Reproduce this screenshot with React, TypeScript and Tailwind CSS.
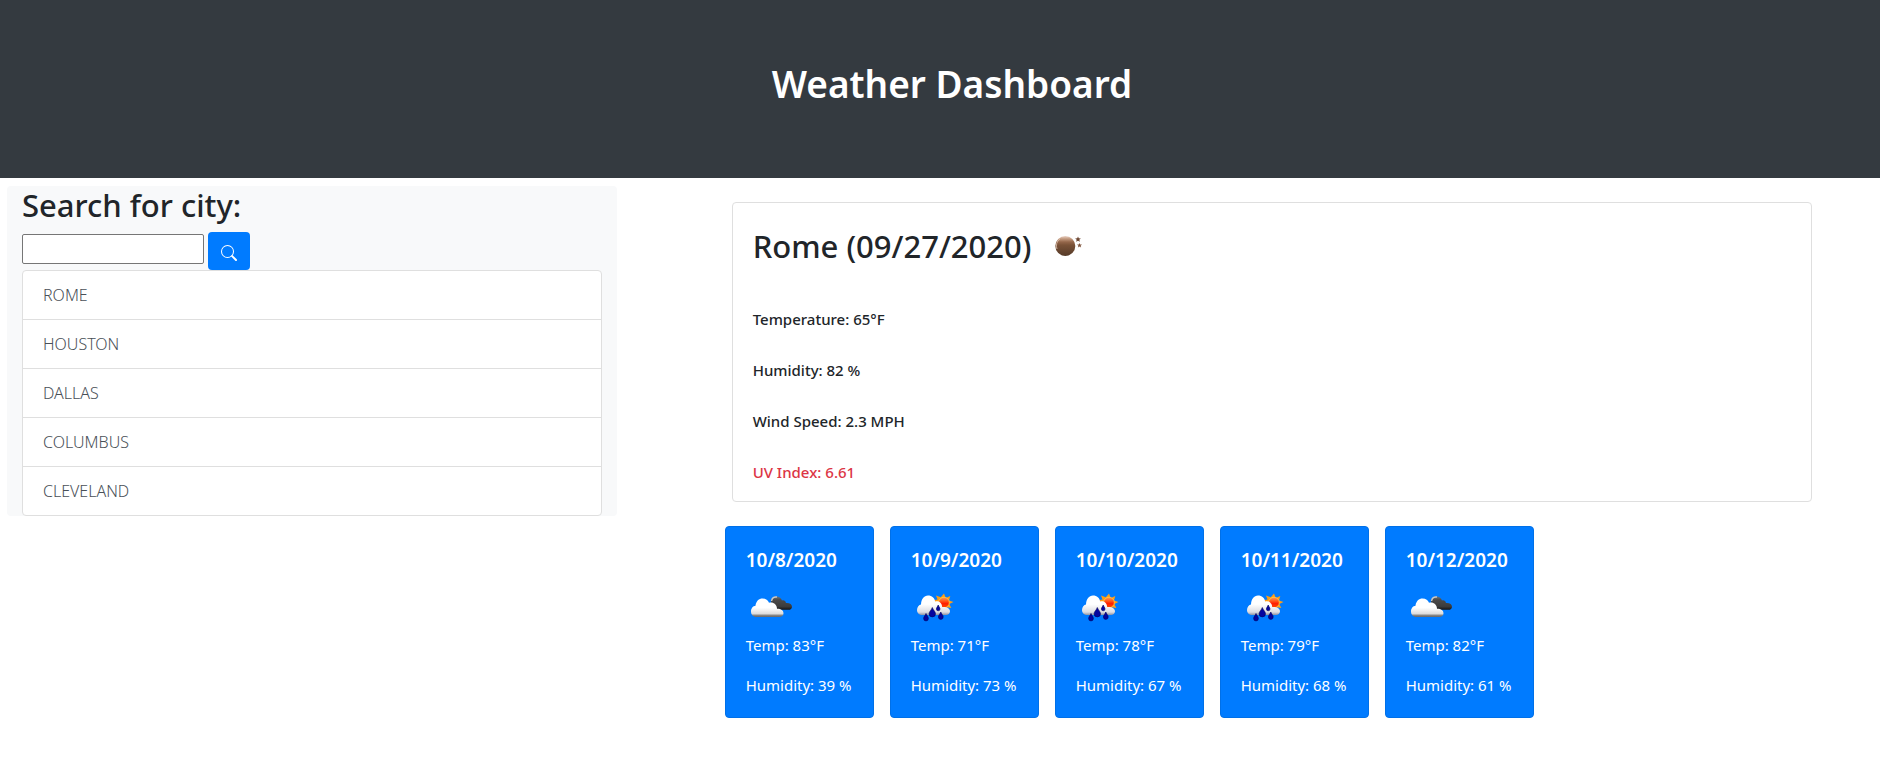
import React from "react";

type Sky = "cloudy" | "showers";

interface Forecast {
  date: string;
  sky: Sky;
  temp: number;
  humidity: number;
}

const cities = ["ROME", "HOUSTON", "DALLAS", "COLUMBUS", "CLEVELAND"];

const forecasts: Forecast[] = [
  { date: "10/8/2020", sky: "cloudy", temp: 83, humidity: 39 },
  { date: "10/9/2020", sky: "showers", temp: 71, humidity: 73 },
  { date: "10/10/2020", sky: "showers", temp: 78, humidity: 67 },
  { date: "10/11/2020", sky: "showers", temp: 79, humidity: 68 },
  { date: "10/12/2020", sky: "cloudy", temp: 82, humidity: 61 },
];

function SearchIcon() {
  return (
    <svg width="16" height="16" viewBox="0 0 16 16" fill="currentColor" aria-hidden="true">
      <path
        fillRule="evenodd"
        d="M10.442 10.442a1 1 0 0 1 1.415 0l3.85 3.85a1 1 0 0 1-1.414 1.415l-3.85-3.85a1 1 0 0 1 0-1.415z"
      />
      <path
        fillRule="evenodd"
        d="M6.5 12a5.5 5.5 0 1 0 0-11 5.5 5.5 0 0 0 0 11zM13 6.5a6.5 6.5 0 1 1-13 0 6.5 6.5 0 0 1 13 0z"
      />
    </svg>
  );
}

function ClearNightIcon() {
  return (
    <svg width="50" height="50" viewBox="0 0 50 50" role="img" aria-label="Clear night">
      <defs>
        <linearGradient id="moon" x1="0" y1="0" x2="0" y2="1">
          <stop offset="0" stopColor="#ecd5c8" />
          <stop offset="0.14" stopColor="#c39a80" />
          <stop offset="0.3" stopColor="#94664a" />
          <stop offset="0.45" stopColor="#7a5238" />
          <stop offset="1" stopColor="#553a28" />
        </linearGradient>
      </defs>
      <circle cx="22.3" cy="25" r="10" fill="url(#moon)" />
      <path d="M14 28a8.6 8.6 0 0 1 3-10.200" stroke="#dfc4b3" strokeWidth="1" fill="none" opacity="0.8" />
      <path d="M35 15.500l.8 1.800 2.100.1-1.600 1.300.6 2.100-1.900-1.100-1.900 1.100.6-2.100-1.600-1.300 2.100-.1z" fill="#6d4632" />
      <path d="M36.500 22l.7 1.500 1.800.1-1.400 1.100.5 1.800-1.600-.9-1.600.9.5-1.800-1.400-1.100 1.800-.1z" fill="#80563f" />
    </svg>
  );
}

function CloudyIcon() {
  return (
    <svg width="50" height="50" viewBox="0 0 50 50" role="img" aria-label="Cloudy">
      <defs>
        <linearGradient id="cloud-front" x1="0" y1="0" x2="0" y2="1">
          <stop offset="0.5" stopColor="#ffffff" />
          <stop offset="0.83" stopColor="#dcdcdc" />
          <stop offset="0.9" stopColor="#8a8a8a" />
          <stop offset="1" stopColor="#666666" />
        </linearGradient>
        <linearGradient id="cloud-back" x1="0" y1="0" x2="0" y2="1">
          <stop offset="0" stopColor="#777777" />
          <stop offset="0.25" stopColor="#4a4a4a" />
          <stop offset="0.75" stopColor="#3c3c3c" />
          <stop offset="1" stopColor="#141414" />
        </linearGradient>
      </defs>
      <path
        d="M25 22c-.5-4 2-6.500 5-6.500 3 0 5 1.500 6 4 1.500-.8 3.500-.2 4 2.500 3.500-.3 6 1 6 3.700 0 2-1.500 3.100-3.500 3.100H32z"
        fill="url(#cloud-back)"
      />
      <path d="M25.500 20c.5-3 2.500-4.500 5.500-4" stroke="#c8c8c8" strokeWidth="1.500" fill="none" />
      <path
        d="M10.500 36C7 36 5 33.500 5 30.500S7 25 9.500 24.800C10 20 13 17.500 16.500 17.500c3.500 0 5.500 1.700 6.500 4.300 4-1.300 8 1.700 8 6 3.500-.2 6.500 1.500 6.500 4.500 0 2.500-2 3.700-4 3.700z"
        fill="url(#cloud-front)"
      />
    </svg>
  );
}

function ShowersIcon() {
  return (
    <svg width="50" height="50" viewBox="0 0 50 50" role="img" aria-label="Sun and rain">
      <defs>
        <linearGradient id="rain-cloud" x1="0" y1="0" x2="0" y2="1">
          <stop offset="0.45" stopColor="#ffffff" />
          <stop offset="0.85" stopColor="#dddde2" />
          <stop offset="1" stopColor="#8d91a3" />
        </linearGradient>
        <linearGradient id="sun" x1="0" y1="0" x2="0" y2="1">
          <stop offset="0" stopColor="#ff9b54" />
          <stop offset="0.35" stopColor="#ff5a1e" />
          <stop offset="0.6" stopColor="#ff1e00" />
          <stop offset="1" stopColor="#ff4a00" />
        </linearGradient>
      </defs>
      <path
        d="M33 12.500l1.800 4.600 4.500-2-1.300 4.300 4.500 1.600-4.200 2 2 4-4.400-.8-.5 4.300-3.400-3-8-6.500-.5-2 3-.5-1.500-4 4.800 1.800z"
        fill="#ff9d14"
      />
      <circle cx="33" cy="21.500" r="5.300" fill="url(#sun)" stroke="#ffd24d" strokeWidth="0.7" />
      <path
        d="M11 34c-3 0-5-2.200-5-5s2-5.200 4-5.500c.2-5.300 3-9 7-9s6.500 2.500 7.200 6c3.800-1.300 6.800 1.700 7 5.500 4-.3 7.800 1 7.800 4.300 0 2.200-1.800 3.700-4 3.700z"
        fill="url(#rain-cloud)"
      />
      <g fill="#0505a0" stroke="#02025c" strokeWidth="0.600">
        <path d="M21.300 26.500c.7 2.400 3.200 4 3.200 6.200a3.200 3.200 0 0 1-6.400 0c0-2.200 2.500-3.800 3.200-6.200z" />
        <path d="M27.200 24c.4 1.500 1.800 2.600 1.800 4a1.800 1.800 0 0 1-3.600 0c0-1.400 1.400-2.500 1.800-4z" />
        <path d="M15 32.500c.6 1.800 2.400 3.300 2.400 5a2.400 2.400 0 0 1-4.800 0c0-1.700 1.800-3.200 2.400-5z" />
        <path d="M29.800 31c.6 1.800 2.400 3.300 2.400 5a2.400 2.400 0 0 1-4.800 0c0-1.700 1.800-3.200 2.400-5z" />
      </g>
    </svg>
  );
}

function SearchPanel() {
  return (
    <section className="rounded bg-[#f8f9fa] px-[15px]">
      <h2 className="mb-2 text-[31px] leading-[38px] font-medium">
        <label htmlFor="city">Search for city:</label>
      </h2>
      <form className="flex items-start gap-1" onSubmit={(e) => e.preventDefault()}>
        <input
          id="city"
          type="text"
          className="mt-0.5 h-[30px] w-[182px] rounded-xs border border-[#767676] bg-white px-1"
        />
        <button
          type="submit"
          aria-label="Search"
          className="flex h-[38px] w-[42px] items-center justify-center rounded bg-[#007bff] pt-1 text-white"
        >
          <SearchIcon />
        </button>
      </form>
      <ul className="divide-y divide-[#dfdfdf] rounded border border-[#dfdfdf] bg-white">
        {cities.map((city) => (
          <li key={city}>
            <button
              type="button"
              className="block w-full px-5 py-3 text-left text-base leading-6 font-light text-[#495057]"
            >
              {city}
            </button>
          </li>
        ))}
      </ul>
    </section>
  );
}

function CurrentWeather() {
  return (
    <section className="ml-[7px] rounded border border-[#dfdfdf] bg-white px-5 pt-[18px] pb-[17px]">
      <h2 className="flex items-center gap-3 text-[31px] leading-[50px] font-medium">
        Rome (09/27/2020)
        <ClearNightIcon />
      </h2>
      <div className="mt-9 flex flex-col gap-[27px] text-[15px] leading-6 font-medium">
        <p>Temperature: 65°F</p>
        <p>Humidity: 82 %</p>
        <p>Wind Speed: 2.3 MPH</p>
        <p className="text-[#dc3545]">UV Index: 6.61</p>
      </div>
    </section>
  );
}

function ForecastCard({ date, sky, temp, humidity }: Forecast) {
  return (
    <article className="w-[149px] rounded border border-[#0070e8] bg-[#007bff] px-5 pt-[21px] pb-5 whitespace-nowrap text-white">
      <h3 className="text-[19px] leading-6 font-semibold">{date}</h3>
      <div className="mt-[9px] mb-0.5">{sky === "cloudy" ? <CloudyIcon /> : <ShowersIcon />}</div>
      <p className="text-[15px] leading-6">Temp: {temp}°F</p>
      <p className="mt-4 text-[15px] leading-6">Humidity: {humidity} %</p>
    </article>
  );
}

export default function App() {
  return (
    <div className="bg-white font-['Noto_Sans','Open_Sans',sans-serif] text-base text-[#212529]">
      <header className="bg-[#343a40] px-8 pt-14 pb-[66px] text-center text-white">
        <h1 className="pl-6 text-[37px] leading-14 font-semibold">Weather Dashboard</h1>
      </header>
      <main className="flex items-start">
        <div className="w-1/3 pt-2 pr-[10px] pl-[7px]">
          <SearchPanel />
        </div>
        <div className="flex-1 pt-6 pr-[68px] pl-[98px]">
          <CurrentWeather />
          <div className="mt-6 flex flex-wrap gap-4">
            {forecasts.map((day) => (
              <ForecastCard key={day.date} {...day} />
            ))}
          </div>
        </div>
      </main>
    </div>
  );
}
